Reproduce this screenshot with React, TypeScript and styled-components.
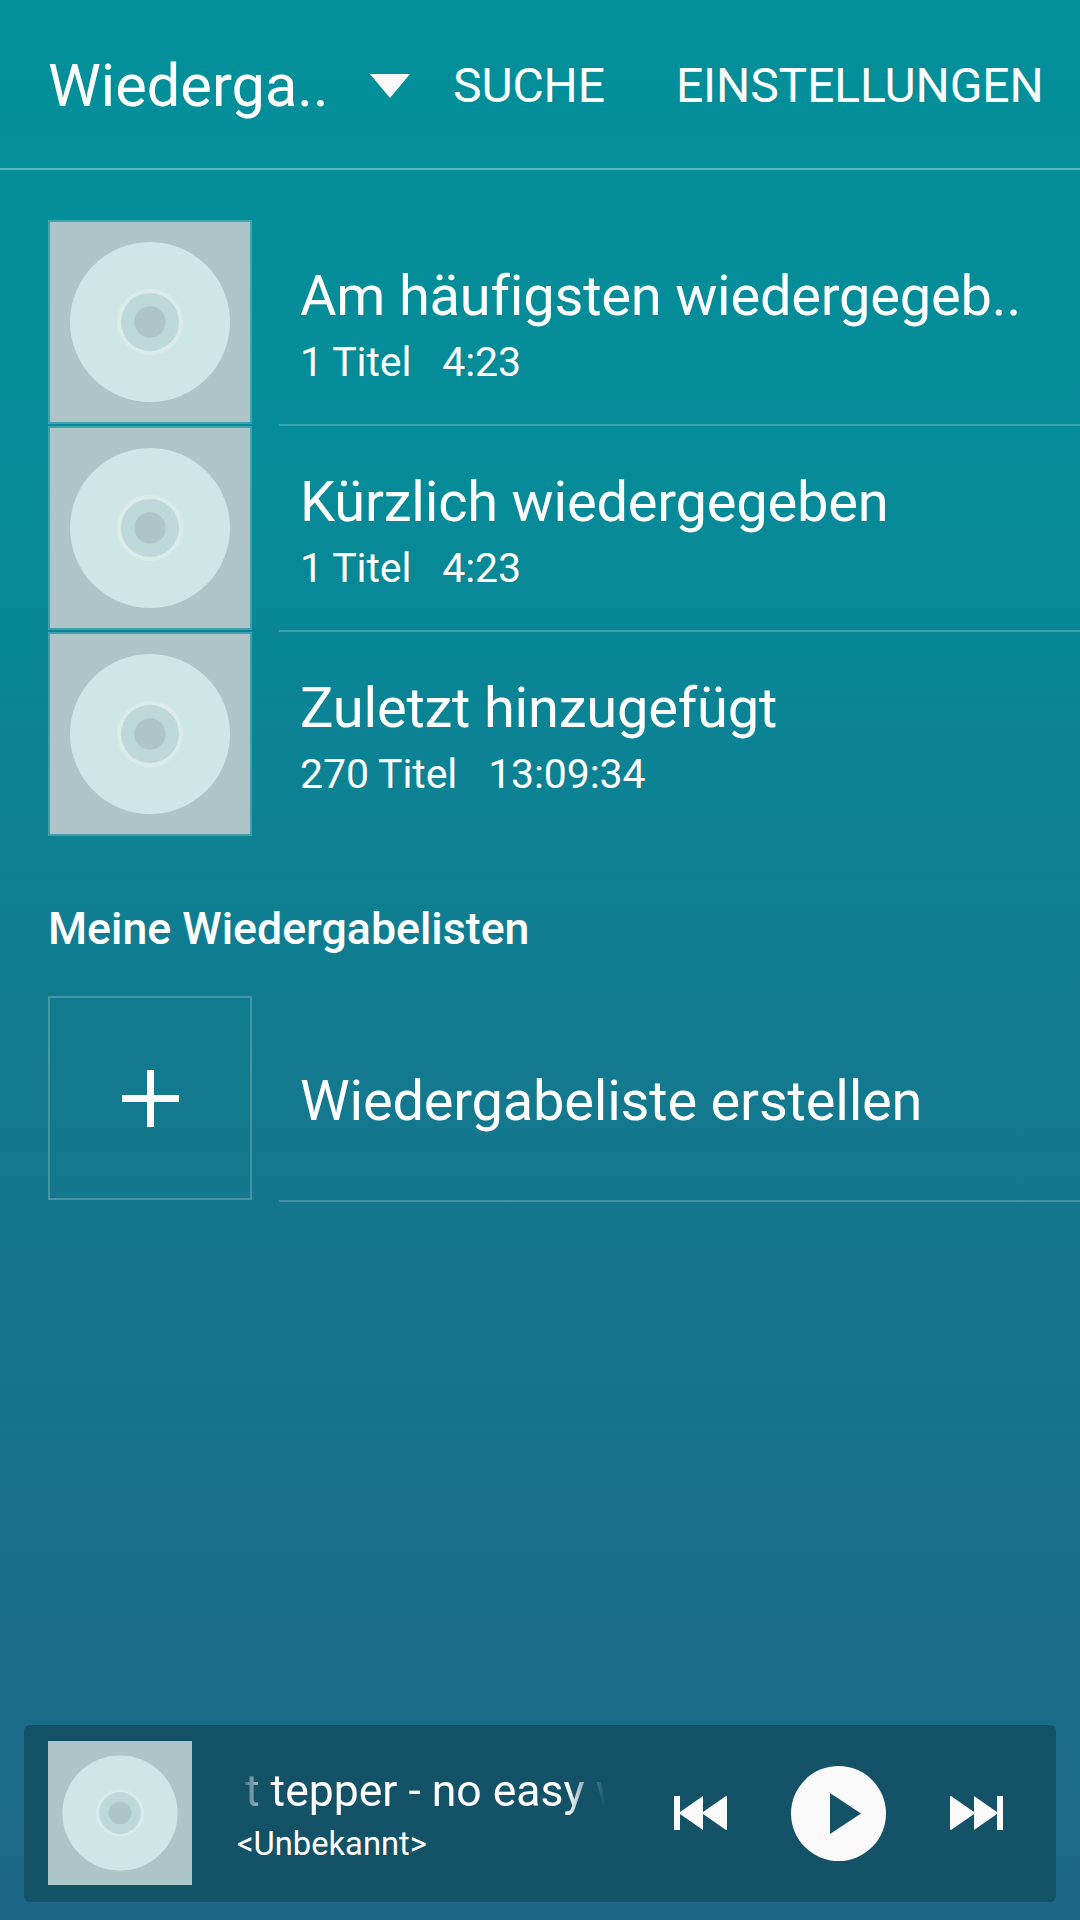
import React from "react";
import styled, {createGlobalStyle} from "styled-components";

const GlobalStyle = createGlobalStyle`
  html, body {
    margin: 0;
    padding: 0;
  }
`;

const Page = styled.div`
  display: flex;
  flex-direction: column;
  width: 1080px;
  height: 1920px;
  overflow: hidden;
  background: linear-gradient(180deg, #02909a 0%, #068b99 25%, #127a8f 55%, #1e6888 100%);
  color: #fff;
  font-family: Roboto, "Liberation Sans", sans-serif;
`;

const Toolbar = styled.header`
  display: flex;
  align-items: center;
  box-sizing: border-box;
  height: 170px;
  padding: 3px 0 0 48px;
  border-bottom: 2px solid rgba(255, 255, 255, 0.35);
  flex-shrink: 0;
`;

const ToolbarTitle = styled.div`
  width: 322px;
  font-size: 59.5px;
  font-weight: 400;
  white-space: nowrap;
`;

const Caret = styled.svg`
  display: block;
  width: 40px;
  height: 24px;
  margin-right: 43px;
`;

const ToolbarAction = styled.div<{ $gap?: number }>`
  font-size: 48px;
  font-weight: 400;
  letter-spacing: -0.1px;
  white-space: nowrap;
  margin-left: ${(p) => p.$gap ?? 0}px;
`;

const List = styled.div`
  display: flex;
  flex-direction: column;
  padding-top: 50px;
`;

const Row = styled.div`
  display: flex;
  height: 206px;
  padding-left: 48px;
`;

const Thumb = styled.div<{ $outline?: boolean }>`
  display: flex;
  align-items: center;
  justify-content: center;
  box-sizing: border-box;
  width: 204px;
  height: 204px;
  flex-shrink: 0;
  border: 2px solid rgba(255, 255, 255, 0.22);
  background: ${(p) => (p.$outline ? "transparent" : "#adc5c6")};
  background-clip: padding-box;
`;

const RowBody = styled.div<{ $noLine?: boolean }>`
  display: flex;
  flex-direction: column;
  justify-content: center;
  flex: 1;
  box-sizing: border-box;
  margin-left: 27px;
  padding: 6px 0 0 21px;
  border-bottom: 2px solid ${(p) => (p.$noLine ? "transparent" : "rgba(255, 255, 255, 0.2)")};
`;

const RowTitle = styled.div`
  font-size: 56px;
  font-weight: 400;
  letter-spacing: -0.2px;
  line-height: 68px;
  white-space: nowrap;
`;

const RowMeta = styled.div`
  display: flex;
  gap: 31px;
  margin-top: 6px;
  font-size: 41px;
  font-weight: 400;
  letter-spacing: -0.1px;
  line-height: 52px;
  white-space: nowrap;
`;

const SectionHeading = styled.h2`
  display: flex;
  align-items: center;
  box-sizing: border-box;
  height: 158px;
  margin: 0;
  padding: 24px 0 0 48px;
  font-size: 44.7px;
  font-weight: 500;
`;

const MiniPlayer = styled.footer`
  display: flex;
  align-items: center;
  box-sizing: border-box;
  height: 177px;
  margin: auto 24px 18px;
  padding: 0 0 1px 24px;
  border-radius: 6px;
  background: #145268;
`;

const MiniThumb = styled.div`
  width: 144px;
  height: 144px;
  flex-shrink: 0;
  background: #adc5c6;
`;

const TrackInfo = styled.div`
  display: flex;
  flex-direction: column;
  gap: 5px;
  width: 368px;
  margin-left: 45px;
`;

const TrackTitle = styled.div`
  overflow: hidden;
  font-size: 44.5px;
  font-weight: 400;
  line-height: 56px;
  white-space: nowrap;
  padding-left: 8px;
  -webkit-mask-image: linear-gradient(90deg, transparent 0, #000 36px, #000 330px, transparent 100%);
  mask-image: linear-gradient(90deg, transparent 0, #000 36px, #000 330px, transparent 100%);
`;

const TrackArtist = styled.div`
  font-size: 32.7px;
  font-weight: 400;
  line-height: 40px;
  white-space: nowrap;
`;

const Controls = styled.div`
  display: flex;
  align-items: center;
  margin-left: 69px;
`;

const SkipIcon = styled.svg`
  display: block;
  width: 53px;
  height: 34px;
`;

const PlayButton = styled.div`
  display: flex;
  align-items: center;
  justify-content: center;
  width: 95px;
  height: 95px;
  margin: 0 64px;
  border-radius: 50%;
  background: #fafafa;
`;

const PlayIcon = styled.svg`
  display: block;
  width: 31px;
  height: 41px;
  margin-left: 14px;
`;

const Disc: React.FunctionComponent = () => (
  <svg viewBox="0 0 200 200" width="100%" height="100%" style={{display: "block"}}>
    <circle cx="100" cy="100" r="80" fill="#cfe6e7"/>
    <circle cx="100" cy="100" r="33" fill="#dcebe9"/>
    <circle cx="100" cy="100" r="29" fill="#bcd8d9"/>
    <circle cx="100" cy="100" r="15.7" fill="#adc5c6"/>
  </svg>
);

const playlists = [
  {title: "Am häufigsten wiedergegeb..", count: "1 Titel", time: "4:23"},
  {title: "Kürzlich wiedergegeben", count: "1 Titel", time: "4:23"},
  {title: "Zuletzt hinzugefügt", count: "270 Titel", time: "13:09:34", noLine: true},
];

const App: React.FunctionComponent = () => (
  <Page>
    <GlobalStyle/>
    <Toolbar>
      <ToolbarTitle>Wiederga..</ToolbarTitle>
      <Caret viewBox="0 0 40 24">
        <path d="M0 0H40L20 24Z" fill="#fafafa"/>
      </Caret>
      <ToolbarAction>SUCHE</ToolbarAction>
      <ToolbarAction $gap={71}>EINSTELLUNGEN</ToolbarAction>
    </Toolbar>
    <List>
      {playlists.map((item) => (
        <Row key={item.title}>
          <Thumb><Disc/></Thumb>
          <RowBody $noLine={item.noLine}>
            <RowTitle>{item.title}</RowTitle>
            <RowMeta>
              <span>{item.count}</span>
              <span>{item.time}</span>
            </RowMeta>
          </RowBody>
        </Row>
      ))}
    </List>
    <SectionHeading>Meine Wiedergabelisten</SectionHeading>
    <Row>
      <Thumb $outline>
        <svg viewBox="0 0 57 57" width="57" height="57">
          <path d="M25 0H32V25H57V32H32V57H25V32H0V25H25Z" fill="#fff"/>
        </svg>
      </Thumb>
      <RowBody>
        <RowTitle>Wiedergabeliste erstellen</RowTitle>
      </RowBody>
    </Row>
    <MiniPlayer>
      <MiniThumb><Disc/></MiniThumb>
      <TrackInfo>
        <TrackTitle>t tepper - no easy w</TrackTitle>
        <TrackArtist>&lt;Unbekannt&gt;</TrackArtist>
      </TrackInfo>
      <Controls>
        <SkipIcon viewBox="0 0 53 34">
          <path d="M0 0H6V16L29 0V16L52 0Q53 0 53 1V33Q53 34 52 34L29 18V34L6 18V34H0Z" fill="#fafafa"/>
        </SkipIcon>
        <PlayButton>
          <PlayIcon viewBox="0 0 31 41">
            <path d="M0 0L31 20.5L0 41Z" fill="#145268"/>
          </PlayIcon>
        </PlayButton>
        <SkipIcon viewBox="0 0 53 34">
          <path d="M53 0H47V16L24 0V16L1 0Q0 0 0 1V33Q0 34 1 34L24 18V34L47 18V34H53Z" fill="#fafafa"/>
        </SkipIcon>
      </Controls>
    </MiniPlayer>
  </Page>
);

export default App;
